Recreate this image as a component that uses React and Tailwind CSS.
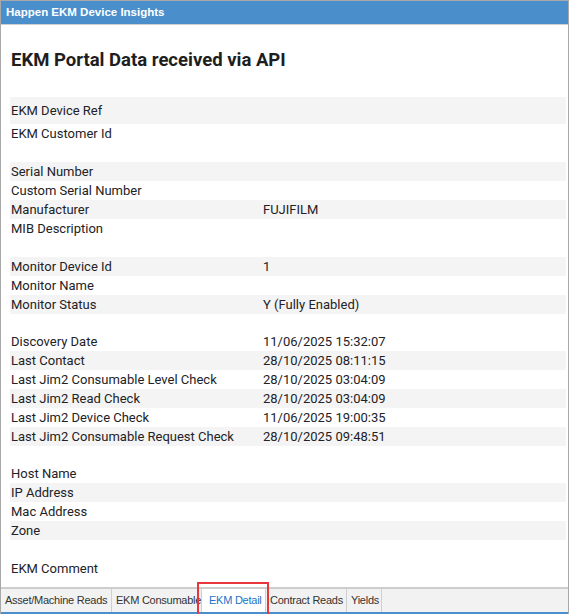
import React from "react";

const rows = [
  { type: "row", label: "EKM Device Ref", grey: true, h: "h-[27px]" },
  { type: "row", label: "EKM Customer Id" },
  { type: "gap" },
  { type: "row", label: "Serial Number", grey: true },
  { type: "row", label: "Custom Serial Number" },
  { type: "row", label: "Manufacturer", value: "FUJIFILM", grey: true },
  { type: "row", label: "MIB Description" },
  { type: "gap" },
  { type: "row", label: "Monitor Device Id", value: "1", grey: true },
  { type: "row", label: "Monitor Name" },
  { type: "row", label: "Monitor Status", value: "Y (Fully Enabled)", grey: true },
  { type: "gap", h: "h-[18px]" },
  { type: "row", label: "Discovery Date", value: "11/06/2025 15:32:07" },
  { type: "row", label: "Last Contact", value: "28/10/2025 08:11:15", grey: true },
  { type: "row", label: "Last Jim2 Consumable Level Check", value: "28/10/2025 03:04:09" },
  { type: "row", label: "Last Jim2 Read Check", value: "28/10/2025 03:04:09", grey: true },
  { type: "row", label: "Last Jim2 Device Check", value: "11/06/2025 19:00:35" },
  { type: "row", label: "Last Jim2 Consumable Request Check", value: "28/10/2025 09:48:51", grey: true },
  { type: "gap", h: "h-[18px]" },
  { type: "row", label: "Host Name" },
  { type: "row", label: "IP Address", grey: true },
  { type: "row", label: "Mac Address" },
  { type: "row", label: "Zone", grey: true },
  { type: "gap" },
  { type: "row", label: "EKM Comment" },
];

function Row({ r }) {
  if (r.type === "gap") return <div className={r.h || "h-[19px]"} />;
  return (
    <div
      className={`flex items-center ${r.h || "h-[19px]"} ${r.grey ? "bg-[#f4f4f4]" : ""}`}
    >
      <div className="w-[253px] pl-[1px] shrink-0">{r.label}</div>
      <div>{r.value || ""}</div>
    </div>
  );
}

const tabs = [
  { label: "Asset/Machine Reads", w: "w-[111px]" },
  { label: "EKM Consumables", w: "w-[90px]" },
  { label: "EKM Detail", w: "w-[64px]", active: true },
  { label: "Contract Reads", w: "w-[81px]" },
  { label: "Yields", w: "w-[35px]" },
];

export default function App() {
  return (
    <div className="w-[569px] h-[614px] bg-white flex flex-col overflow-hidden border-l border-r border-[#a8a8a8] relative">
      <div className="h-[25px] shrink-0 border-t border-[#a8a8a8] border-b border-b-[#cfcfcf] bg-[#4a8ecc] flex items-center pl-[5px]">
        <span
          className="text-white font-bold text-[11.5px]"
          style={{ fontFamily: '"Liberation Sans", Arial, sans-serif' }}
        >
          Happen EKM Device Insights
        </span>
      </div>
      <div
        className="flex-1 flex flex-col pl-[9px] pr-[2px] text-[13px] text-[#222226]"
        style={{ fontFamily: 'Roboto, "Noto Sans", sans-serif' }}
      >
        <div className="pt-[23px] mb-[25px] pl-[1px] text-[18.5px] leading-[24px] font-bold text-[#1e1e1e]">
          EKM Portal Data received via API
        </div>
        {rows.map((r, i) => (
          <Row key={i} r={r} />
        ))}
      </div>
      <div
        className="h-[27px] shrink-0 bg-[#f2f2f2] border-t-2 border-[#cdcdcd] border-b-2 border-b-[#4a8ecc] flex items-stretch text-[11px] tracking-[-0.25px] text-[#333]"
        style={{ fontFamily: '"Liberation Sans", Arial, sans-serif' }}
      >
        {tabs.map((t, i) => (
          <div
            key={i}
            className={`${t.w} shrink-0 flex items-center pl-[4px] whitespace-nowrap overflow-hidden border-r border-[#cfcfcf] ${
              t.active ? "bg-white text-[#1a73c8] pl-[7px]" : ""
            }`}
          >
            {t.label}
          </div>
        ))}
      </div>
      <div className="absolute left-[196px] top-[582px] w-[72px] h-[34px] border-2 border-[#e8363c] pointer-events-none" />
    </div>
  );
}
